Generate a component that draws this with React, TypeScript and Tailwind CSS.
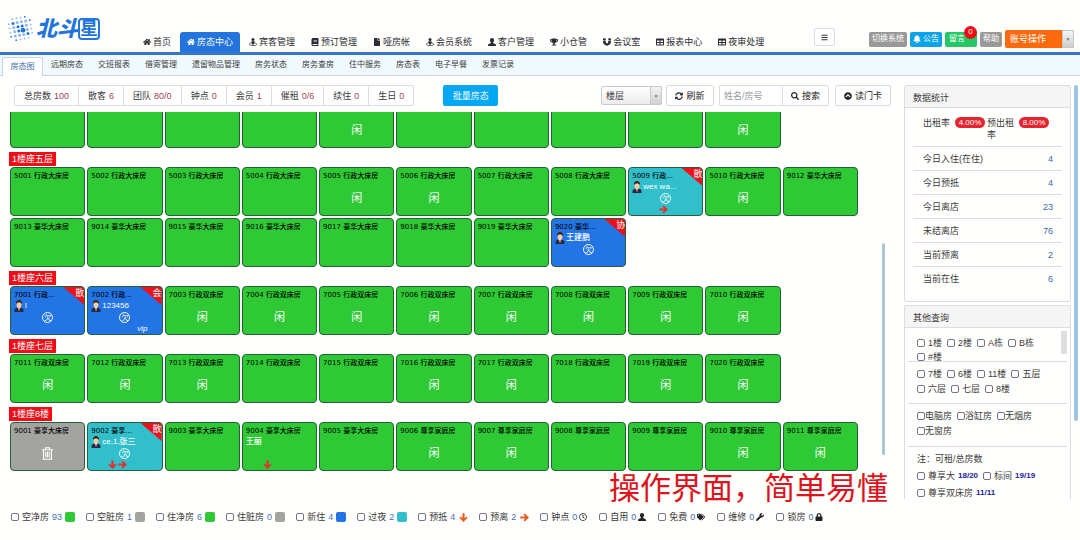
import React from "react";
import {
  FaBars, FaBell, FaBook, FaChevronCircleUp, FaFile, FaHome, FaLock,
  FaMagnet, FaRegClock, FaSearch, FaSyncAlt, FaTable, FaTags, FaTrophy, FaWrench,
} from "react-icons/fa";

type IconProps = { className?: string };

function BustIcon({ className = "" }: IconProps) {
  return (
    <svg viewBox="0 0 16 16" className={`size-2 ${className}`} fill="currentColor" aria-hidden="true">
      <path d="M8 0c2.600 0 4 1.900 4 4.300 0 1.900-.8 3.700-2 4.600v1.300l4.500 1.900c1 .4 1.500 1 1.500 2V16H0v-1.900c0-1 .5-1.600 1.500-2L6 10.200V8.900c-1.200-.9-2-2.700-2-4.600C4 1.900 5.400 0 8 0z" />
    </svg>
  );
}

function GuestIcon({ className = "" }: IconProps) {
  return (
    <svg viewBox="0 0 16 16" className={`size-2 ${className}`} fill="currentColor" aria-hidden="true">
      <circle cx="8" cy="3" r="3" />
      <path d="M5 6.500h6l.8 4-1.800.7V13H6v-1.800l-1.800-.7z" />
      <path d="M3.500 10C1.500 10.600.8 11.500.8 12.500c0 1.700 3 2.700 7.200 2.700s7.200-1 7.200-2.700c0-1-.7-1.900-2.700-2.500" fill="none" stroke="currentColor" strokeWidth="1.600" />
    </svg>
  );
}

function Arrow({ dir, className = "" }: { dir: "down" | "right"; className?: string }) {
  return (
    <svg viewBox="0 0 16 16" className={`size-[9px] ${dir === "down" ? "rotate-90" : ""} ${className}`} fill="currentColor" aria-hidden="true">
      <path d="M8.500.8L16 8l-7.500 7.200-2.200-2.100 3-3.200H0.500V6.100h8.800l-3-3.200z" />
    </svg>
  );
}

const NAV = [
  { label: "首页", icon: FaHome },
  { label: "房态中心", icon: FaHome, active: true },
  { label: "宾客管理", icon: GuestIcon },
  { label: "预订管理", icon: FaBook },
  { label: "哑房帐", icon: FaFile },
  { label: "会员系统", icon: GuestIcon },
  { label: "客户管理", icon: BustIcon },
  { label: "小仓管", icon: FaTrophy },
  { label: "会议室", icon: FaMagnet },
  { label: "报表中心", icon: FaTable },
  { label: "夜审处理", icon: FaTable },
];

const SUBNAV = ["远期房态", "交班报表", "借寄管理", "遗留物品管理", "房务状态", "房务查房", "住中服务", "房态表", "电子早餐", "发票记录"];

const COUNTS = [
  ["总房数", "100"], ["散客", "6"], ["团队", "80/0"], ["钟点", "0"],
  ["会员", "1"], ["催租", "0/6"], ["续住", "0"], ["生日", "0"],
];

type Room = {
  id: string;
  type: string;
  idle?: boolean;
  tone?: "green" | "blue" | "teal" | "gray";
  tag?: string;
  guest?: string;
  avatar?: boolean;
  owes?: boolean;
  arrows?: ("down" | "right")[];
  vip?: boolean;
};

const TONES = {
  green: "bg-[#2fc935]",
  blue: "bg-[#2374e4]",
  teal: "bg-[#31bfcb]",
  gray: "bg-[#a3a3a0]",
};

function series(start: number, count: number, type: string, idle: number[] = []): Room[] {
  return Array.from({ length: count }, (_, i) => ({ id: String(start + i), type, idle: idle.includes(start + i) }));
}

const TOP_ROW = series(1, 10, "", [5, 10]);

const FLOORS: { name: string; rooms: Room[] }[] = [
  {
    name: "1楼座五层",
    rooms: [
      ...series(5001, 8, "行政大床房", [5005, 5006]),
      { id: "5009", type: "行政...", tone: "teal", tag: "散", guest: "wex wa...", avatar: true, owes: true, arrows: ["right"] },
      ...series(5010, 1, "行政大床房", [5010]),
      ...series(9012, 8, "豪华大床房"),
      { id: "9020", type: "豪华...", tone: "blue", tag: "协", guest: "王建鹏", avatar: true, owes: true },
    ],
  },
  {
    name: "1楼座六层",
    rooms: [
      { id: "7001", type: "行政...", tone: "blue", tag: "散", guest: "l", avatar: true, owes: true },
      { id: "7002", type: "行政...", tone: "blue", tag: "会", guest: "123456", avatar: true, owes: true, vip: true },
      ...series(7003, 8, "行政双床房", [7003, 7004, 7005, 7006, 7007, 7008, 7009, 7010]),
    ],
  },
  {
    name: "1楼座七层",
    rooms: series(7011, 10, "行政双床房", [7011, 7012, 7013, 7016, 7017, 7019, 7020]),
  },
  {
    name: "1楼座8楼",
    rooms: [
      { id: "9001", type: "豪享大床房", tone: "gray" },
      { id: "9002", type: "豪享...", tone: "teal", tag: "散", guest: "ce,1,张三", avatar: true, owes: true, arrows: ["down", "right"] },
      ...series(9003, 1, "豪享大床房"),
      { id: "9004", type: "豪享大床房", guest: "王丽", arrows: ["down"] },
      ...series(9005, 1, "豪享大床房"),
      ...series(9006, 6, "尊享家庭房", [9006, 9007, 9010, 9011]),
    ],
  },
];

const STATS = [
  ["今日入住(在住)", "4"], ["今日预抵", "4"], ["今日离店", "23"],
  ["未结离店", "76"], ["当前预离", "2"], ["当前在住", "6"],
];

const LEGEND: { label: string; n: number; swatch?: string; icon?: React.ReactNode; tight?: boolean }[] = [
  { label: "空净房", n: 93, swatch: "bg-[#2fc935]" },
  { label: "空脏房", n: 1, swatch: "bg-[#a3a3a0]" },
  { label: "住净房", n: 6, swatch: "bg-[#2fc935]" },
  { label: "住脏房", n: 0, swatch: "bg-[#a3a3a0]" },
  { label: "新住", n: 4, swatch: "bg-[#2374e4]" },
  { label: "过夜", n: 2, swatch: "bg-[#31bfcb]" },
  { label: "预抵", n: 4, icon: <Arrow dir="down" className="text-[#ee5a1c]" /> },
  { label: "预离", n: 2, icon: <Arrow dir="right" className="text-[#ee5a1c]" /> },
  { label: "钟点", n: 0, icon: <FaRegClock />, tight: true },
  { label: "自用", n: 0, icon: <BustIcon />, tight: true },
  { label: "免费", n: 0, icon: <FaTags />, tight: true },
  { label: "维修", n: 0, icon: <FaWrench />, tight: true },
  { label: "锁房", n: 0, icon: <FaLock />, tight: true },
];

function Tick() {
  return <input type="checkbox" className="size-2 shrink-0 appearance-none rounded-[2px] border border-[#73738c] bg-white checked:bg-[#2374e4]" />;
}

function Check({ label, extra, tight }: { label: string; extra?: string; tight?: boolean }) {
  return (
    <label className={tight ? "flex items-center" : "flex items-center gap-[3px]"}>
      <Tick />
      <span>{label}</span>
      {extra && <b className="text-[8px] text-[#20209a]">{extra}</b>}
    </label>
  );
}

function LogoDots() {
  const dots: React.ReactNode[] = [];
  for (let r = 0; r < 6; r++) {
    for (let c = 0; c < 6; c++) {
      const d = Math.hypot(r - 2.5, c - 2.5);
      if (d > 3.3) continue;
      const strong = (r * 7 + c * 5) % 4 === 0 || d < 1;
      dots.push(
        <circle
          key={`${r}-${c}`}
          cx={2 + c * 4.2 + r * 0.8}
          cy={5 + r * 4.2 - c * 0.8}
          r={r === 3 && c === 3 ? 2.4 : d < 2.2 ? 1.5 : 0.9}
          fill={strong ? "#2374dc" : "#8fb8ec"}
        />,
      );
    }
  }
  return <svg viewBox="0 0 28 28" className="h-7 w-7" aria-hidden="true">{dots}</svg>;
}

function Avatar() {
  return (
    <svg viewBox="0 0 20 24" className="h-3 w-[10px] shrink-0" aria-hidden="true">
      <path d="M1 24v-4c0-3 3-4 6-5h6c3 1 6 2 6 5v4z" fill="#232b45" />
      <path d="M7 14h6l-3 8z" fill="#f4f4f4" />
      <path d="M9.300 16h1.400l.6 4-1.300 2-1.300-2z" fill="#c8442f" />
      <ellipse cx="10" cy="9" rx="5" ry="6.500" fill="#f3cda4" />
      <path d="M4 9C3 3 6 0 10 0s7 3 6 9c-1-3-3-4-6-4S5 6 4 9z" fill="#3a2418" />
    </svg>
  );
}

function TrashIcon() {
  return (
    <svg viewBox="0 0 22 26" className="h-[13px] w-[11px]" fill="none" stroke="white" strokeWidth="2.200" aria-hidden="true">
      <path d="M0 5.500h22M7 5V1.500h8V5M3 6v18.500h16V6M7.500 9v12M11 9v12M14.500 9v12" />
    </svg>
  );
}

function RoomCard({ room }: { room: Room }) {
  return (
    <article className={`relative h-[49px] overflow-hidden rounded-[4px] border border-[#25603a] ${TONES[room.tone ?? "green"]}`}>
      {room.type && (
        <h3 className="px-[3px] pt-1 font-['DejaVu_Sans','Noto_Sans_CJK_SC',sans-serif] text-[7px] leading-[9px] font-medium whitespace-nowrap text-black">
          {room.id} {room.type}
        </h3>
      )}
      {room.guest && (
        <div className="flex h-[11px] items-center gap-px px-[3px] text-[8px] leading-[11px] font-medium text-white">
          {room.avatar && <Avatar />}
          <span>{room.guest}</span>
        </div>
      )}
      {room.tag && (
        <>
          <span className="absolute top-0 right-0 h-[18px] w-[21px] bg-[#f0101a] [clip-path:polygon(0_0,100%_0,100%_100%)]" />
          <span className="absolute top-px right-0 text-[9px] leading-[11px] text-white">{room.tag}</span>
        </>
      )}
      {(room.idle || room.owes || room.tone === "gray") && (
        <div className="absolute inset-x-0 top-6 flex h-3 items-center justify-center text-white">
          {room.idle && <span className="text-[11px] leading-3">闲</span>}
          {room.owes && <span className="flex size-[11px] items-center justify-center rounded-full border border-white text-[7px] leading-none">欠</span>}
          {room.tone === "gray" && <TrashIcon />}
        </div>
      )}
      {room.arrows && (
        <div className={`absolute bottom-px flex gap-px text-[#e23030] ${room.arrows[0] === "down" ? "left-5" : "left-[30px]"}`}>
          {room.arrows.map((a) => <Arrow key={a} dir={a} />)}
        </div>
      )}
      {room.vip && <em className="absolute right-[14px] bottom-0 text-[8px] leading-[10px] text-white">vip</em>}
    </article>
  );
}

function RoomGrid({ rooms }: { rooms: Room[] }) {
  return <div className="grid grid-cols-11 gap-[2px] pl-px">{rooms.map((r) => <RoomCard key={r.id} room={r} />)}</div>;
}

const outlineButton = "flex h-[21px] items-center justify-center gap-[3px] rounded-[2px] border border-[#dadae6] bg-white text-[#222]";

export default function App() {
  return (
    <div className="flex min-h-screen flex-col bg-[#fffffd] font-['Liberation_Sans','Noto_Sans_CJK_SC',sans-serif] text-[9px] leading-3 text-[#3a3a3a]">
      <header className="flex h-[55px] items-end border-b-[3px] border-[#3375c6]">
        <a href="#home" className="flex w-[136px] items-center gap-[2px] pb-[9px] pl-[6px] text-[#2374dc]" aria-label="北斗星">
          <LogoDots />
          <span className="flex items-center">
            <span className="text-[21px] leading-[24px] font-black italic">北斗</span>
            <span className="flex size-[22px] items-center justify-center rounded-[4px] border-2 border-[#2374dc] text-[18px] leading-none font-bold">星</span>
          </span>
        </a>
        <nav className="flex h-5 gap-[2px]">
          {NAV.map(({ label, icon: Icon, active }) => (
            <a
              key={label}
              href="#nav"
              className={`flex items-center gap-[2px] rounded-t-[3px] px-[7px] whitespace-nowrap ${active ? "bg-[#2374dc] text-white" : "text-[#2c2c34]"}`}
            >
              <Icon className="size-2" />
              {label}
            </a>
          ))}
        </nav>
        <div className="ml-auto flex items-center gap-[3px] pr-[6px] pb-[2px] text-[8px] text-white">
          <button aria-label="菜单" className="mr-[31px] mb-1 flex h-[18px] w-[21px] items-center justify-center rounded-[2px] border border-[#dcdce6] bg-white text-[#333]">
            <FaBars className="size-[7px]" />
          </button>
          <button className="h-[15px] rounded-[2px] bg-[#999998] px-[3px]">切换系统</button>
          <button className="flex h-[15px] items-center gap-[2px] rounded-[2px] bg-[#0ba3ea] px-[3px]">
            <FaBell className="size-2" />公告
          </button>
          <button className="relative h-[15px] w-8 rounded-[2px] bg-[#25c866] pr-2">
            留言
            <span className="absolute -top-[6px] right-0 flex size-[13px] items-center justify-center rounded-full bg-[#ee0c14] text-[8px] leading-none">0</span>
          </button>
          <button className="h-[15px] rounded-[2px] bg-[#999998] px-[3px]">帮助</button>
          <div className="relative h-[18px] w-[69px]">
            <select aria-label="账号" className="h-full w-full appearance-none rounded-[2px] bg-[#fd6a0c] pl-[5px] text-[9px] text-white">
              <option>账号操作</option>
            </select>
            <span className="pointer-events-none absolute inset-y-0 right-0 flex w-3 items-center justify-center rounded-r-[2px] border border-[#c8c8c8] bg-gradient-to-b from-[#f4f4f4] to-[#cfcfcf] text-[5px] text-[#777]">▼</span>
          </div>
        </div>
      </header>

      <nav className="flex h-[21px] items-end border-b border-[#c9d4e2] bg-[#f0f9fd] text-[8px]">
        <a href="#map" className="-mb-px ml-[2px] flex h-[19px] w-[41px] items-center justify-center rounded-t-[3px] border border-b-0 border-[#c9d4e2] bg-white text-[#3b6fa8]">房态图</a>
        <div className="flex h-full items-center gap-[15px] pl-2">
          {SUBNAV.map((s) => <a key={s} href="#sub" className="whitespace-nowrap">{s}</a>)}
        </div>
      </nav>

      <main className="flex pt-[9px] pr-[2px]">
        <section className="relative flex min-w-0 flex-1 flex-col">
          <div className="flex h-[21px] items-center pl-[14px]">
            <ul className="flex h-[21px] rounded-[2px] border border-[#dcdce6] bg-white">
              {COUNTS.map(([k, v]) => (
                <li key={k} className="flex items-center gap-[3px] border-r border-[#dcdce6] px-[9px] whitespace-nowrap last:border-r-0">
                  {k}<span className="text-[#a04258]">{v}</span>
                </li>
              ))}
            </ul>
            <button className="ml-[29px] h-[21px] w-[55px] rounded-[2px] bg-[#04a8f2] text-white">批量房态</button>
            <div className="relative ml-auto h-[19px] w-[61px]">
              <select aria-label="楼层" className="h-full w-full appearance-none rounded-[2px] border border-[#c8c8ce] bg-gradient-to-b from-white to-[#ececec] pl-1 text-[9px]">
                <option>楼层</option>
              </select>
              <span className="pointer-events-none absolute inset-y-0 right-0 flex w-3 items-center justify-center rounded-r-[2px] border border-[#c8c8ce] bg-gradient-to-b from-[#f4f4f4] to-[#d0d0d0] text-[5px] text-[#777]">▼</span>
            </div>
            <button className={`${outlineButton} ml-1 w-12`}><FaSyncAlt className="size-2" />刷新</button>
            <form className="ml-[5px] flex" onSubmit={(e) => e.preventDefault()}>
              <input aria-label="姓名/房号" placeholder="姓名/房号" className="h-[21px] w-[63px] rounded-l-[2px] border border-r-0 border-[#dadae6] bg-white pl-1 placeholder:text-[#999]" />
              <button className={`${outlineButton} w-[47px] rounded-l-none`}><FaSearch className="size-2" />搜索</button>
            </form>
            <button className={`${outlineButton} ml-[6px] w-14`}><FaChevronCircleUp className="size-2" />读门卡</button>
          </div>

          <div className="mt-[6px] flex pr-[6px] pl-[9px]">
            <div className="flex flex-1 flex-col gap-1">
              <div className="flex h-9 flex-col justify-end overflow-hidden [&>div]:shrink-0">
                <RoomGrid rooms={TOP_ROW} />
              </div>
              {FLOORS.map((f) => (
                <section key={f.name} className="flex flex-col items-stretch gap-px">
                  <h2 className="h-[14px] self-start bg-[#f20c16] px-[3px] text-[9px] leading-[14px] text-white">{f.name}</h2>
                  <RoomGrid rooms={f.rooms} />
                </section>
              ))}
            </div>
            <div className="ml-6 flex w-[3px] flex-col">
              <div className="mt-[131px] h-[212px] rounded-full bg-[#a9c8d4]" />
            </div>
          </div>
          <p className="absolute right-[3px] -bottom-1 font-['Noto_Sans_CJK_SC',sans-serif] text-[31px] leading-[34px] whitespace-nowrap text-[#dc1420]">操作界面，简单易懂</p>
        </section>

        <aside className="ml-[13px] flex w-[167px] flex-col gap-[3px]">
          <section className="rounded-[2px] border border-[#dcdce2]">
            <h2 className="h-[22px] border-b border-[#dcdce2] bg-[#f5f5f5] pl-2 leading-[24px]">数据统计</h2>
            <div className="px-2 pb-[10px]">
              <div className="flex h-[39px] items-start border-b border-[#dcdce6] pt-[9px] pl-[10px]">
                <span className="w-8">出租率</span>
                <span className="h-[11px] w-[30px] rounded-full bg-[#e6242f] text-center text-[8px] leading-[11px] text-white">4.00%</span>
                <span className="ml-[2px] w-8">预出租率</span>
                <span className="h-[11px] w-[30px] rounded-full bg-[#e6242f] text-center text-[8px] leading-[11px] text-white">8.00%</span>
              </div>
              <dl>
                {STATS.map(([k, v]) => (
                  <div key={k} className="flex h-6 items-center justify-between border-b border-[#dcdce6] pr-[9px] pl-[10px] last:border-b-0">
                    <dt>{k}</dt>
                    <dd className="text-[#3b6aa8]">{v}</dd>
                  </div>
                ))}
              </dl>
            </div>
          </section>

          <section className="rounded-t-[2px] border border-b-0 border-[#dcdce2]">
            <h2 className="h-[22px] border-b border-[#dcdce2] bg-[#f5f5f5] pl-2 leading-[24px]">其他查询</h2>
            <div className="px-[3px]">
              <div className="flex h-[34px] justify-between overflow-hidden border-b border-[#dcdce6] pt-[3px] pl-[9px]">
                <div className="flex flex-wrap content-start gap-x-[5px] gap-y-[2px] pt-[6px]">
                  <Check label="1楼" /><Check label="2楼" /><Check label="A栋" /><Check label="B栋" /><Check label="#楼" />
                </div>
                <div className="h-[23px] w-[6px] shrink-0 bg-[#dfdfe2]" />
              </div>
              <div className="flex h-[42px] flex-wrap content-start gap-x-[5px] gap-y-[3px] border-b border-[#dcdce6] pt-[6px] pr-5 pl-[9px]">
                <Check label="7楼" /><Check label="6楼" /><Check label="11楼" /><Check label="五层" />
                <Check label="六层" /><Check label="七层" /><Check label="8楼" />
              </div>
              <div className="flex h-[43px] flex-wrap content-start gap-x-[5px] gap-y-[3px] border-b border-[#dcdce6] pt-[6px] pl-[9px]">
                <Check tight label="电脑房" /><Check tight label="浴缸房" /><Check tight label="无烟房" /><Check tight label="无窗房" />
              </div>
              <div className="flex flex-wrap gap-x-[5px] gap-y-[5px] pt-[6px] pl-[9px]">
                <p className="w-full">注：可租/总房数</p>
                <Check label="尊享大" extra="18/20" /><Check label="标间" extra="19/19" /><Check label="尊享双床房" extra="11/11" />
              </div>
            </div>
          </section>
        </aside>
        <div className="ml-[3px] h-[336px] w-1 rounded-full bg-[#9fc3e2]" />
      </main>

      <footer className="flex items-center gap-[11px] pt-3 pl-[11px]">
        {LEGEND.map(({ label, n, swatch, icon, tight }) => (
          <label key={label} className="flex items-center gap-[3px] whitespace-nowrap">
            <Tick />
            <span>{label}</span>
            <span className={`flex items-center ${tight ? "gap-px" : "gap-[3px]"}`}>
              <span className="text-[#4a6fb0]">{n}</span>
              {swatch && <span className={`size-[10px] rounded-[2px] ${swatch}`} />}
              {icon && <span className="flex w-[10px] shrink-0 items-center justify-center text-[8px] text-[#222]">{icon}</span>}
            </span>
          </label>
        ))}
      </footer>
    </div>
  );
}
